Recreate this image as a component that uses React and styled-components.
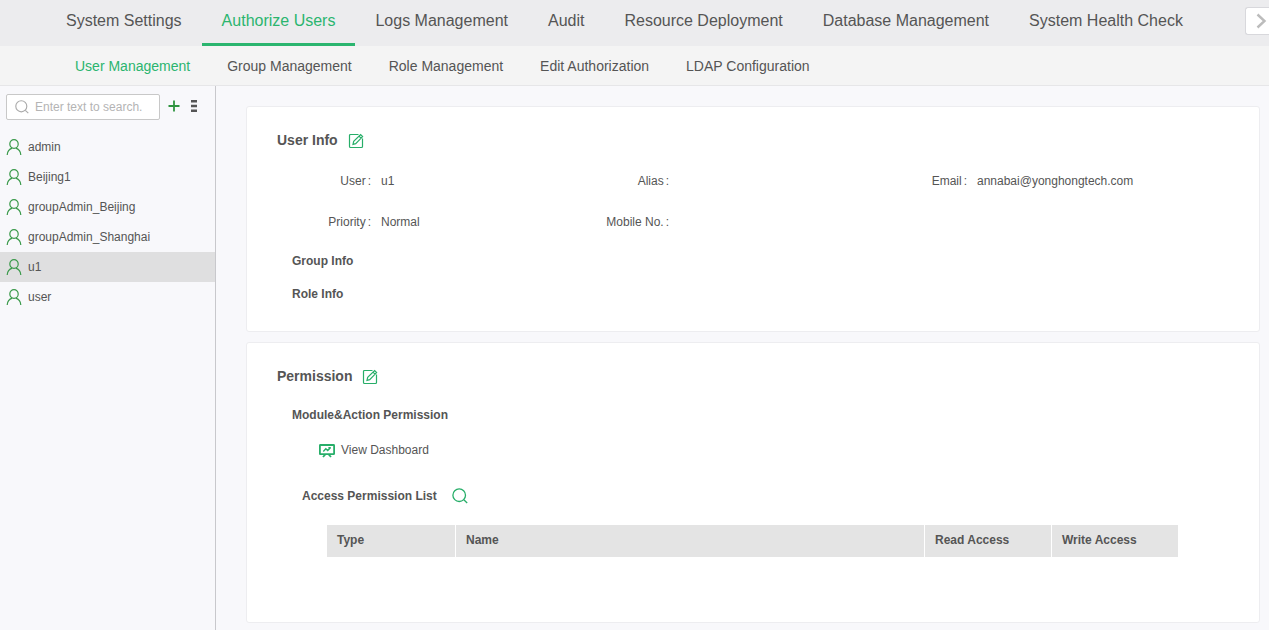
import { useState } from "react";
import styled, { createGlobalStyle } from "styled-components";

const GlobalStyle = createGlobalStyle`
  * {
    box-sizing: border-box;
  }

  body {
    margin: 0;
    background-color: #f8f8fb;
    color: #555;
    font-family: "Liberation Sans", Arial, Helvetica, sans-serif;
    font-size: 12px;
    line-height: 16px;
  }
`;

const Page = styled.div`
  display: flex;
  flex-direction: column;
  min-height: 100vh;
`;

const TopBar = styled.header`
  display: flex;
  justify-content: space-between;
  align-items: flex-start;
  background-color: #ececee;
`;

const TopTabs = styled.nav`
  display: flex;
  padding-left: 46px;
`;

const TopTab = styled.a`
  height: 46px;
  padding: 0 20px;
  border-bottom: 3px solid ${({ $active }) => ($active ? "#2bb56f" : "transparent")};
  color: ${({ $active }) => ($active ? "#2bb56f" : "#555")};
  font-size: 16px;
  line-height: 42px;
  text-decoration: none;
  white-space: nowrap;
`;

const ScrollButton = styled.button`
  display: flex;
  align-items: center;
  justify-content: center;
  width: 24px;
  height: 28px;
  margin-top: 7px;
  padding: 0 0 0 7px;
  border: 1px solid #d8d8dc;
  border-right: none;
  border-radius: 3px 0 0 3px;
  background-color: #fff;
`;

const SubTabs = styled.nav`
  display: flex;
  gap: 37px;
  height: 40px;
  padding-left: 75px;
  border-bottom: 1px solid #e6e6e8;
  background-color: #f4f4f4;
`;

const SubTab = styled.a`
  color: ${({ $active }) => ($active ? "#2bb56f" : "#555")};
  font-size: 14px;
  line-height: 40px;
  text-decoration: none;
  white-space: nowrap;
`;

const Body = styled.div`
  display: flex;
  flex: 1;
`;

const Sidebar = styled.aside`
  flex: none;
  width: 216px;
  border-right: 1px solid #c8c8cc;
`;

const SearchRow = styled.div`
  display: flex;
  align-items: center;
  padding: 8px 6px 12px;
`;

const SearchBox = styled.label`
  display: flex;
  align-items: center;
  gap: 6px;
  width: 154px;
  height: 26px;
  margin-right: 8px;
  padding-left: 8px;
  border: 1px solid #c8c8c8;
  border-radius: 2px;
  background-color: #fff;
`;

const SearchInput = styled.input`
  flex: 1;
  min-width: 0;
  padding: 0;
  border: none;
  outline: none;
  background: none;
  color: #555;
  font: inherit;

  &::placeholder {
    color: #b4b4b4;
  }
`;

const IconButton = styled.button`
  display: flex;
  padding: 0;
  border: none;
  background: none;
  cursor: pointer;
`;

const SidebarButton = styled(IconButton)`
  margin-right: 10px;
  margin-bottom: 2px;
`;

const UserList = styled.ul`
  margin: 0;
  padding: 0;
  list-style: none;
`;

const UserItem = styled.button`
  display: flex;
  align-items: center;
  gap: 6px;
  width: 100%;
  height: 30px;
  padding: 0 6px;
  border: none;
  background-color: ${({ $selected }) => ($selected ? "#dfdfe0" : "transparent")};
  color: #555;
  font: inherit;
  text-align: left;
  cursor: pointer;
`;

const Main = styled.main`
  display: flex;
  flex: 1;
  flex-direction: column;
  gap: 10px;
  min-width: 0;
  padding: 20px 9px 7px 30px;
`;

const Card = styled.section`
  padding: 24px 81px 12px 30px;
  border: 1px solid #ededf0;
  border-radius: 3px;
  background-color: #fff;
`;

const PermissionCard = styled(Card)`
  flex: 1;
`;

const CardHeader = styled.div`
  display: flex;
  align-items: flex-end;
  gap: 10px;
`;

const CardTitle = styled.h2`
  margin: 0;
  font-size: 14px;
  line-height: 18px;
`;

const Fields = styled.dl`
  display: grid;
  grid-template-columns: repeat(3, 1fr);
  row-gap: 25px;
  margin: 24px 0 23px;
  padding-right: 7px;
`;

const Field = styled.div`
  display: flex;
  gap: 10px;
  height: 16px;
`;

const FieldLabel = styled.dt`
  display: flex;
  flex: none;
  justify-content: flex-end;
  gap: 2px;
  width: 94px;
`;

const FieldValue = styled.dd`
  margin: 0;
`;

const SubTitle = styled.h3`
  margin: 0 0 17px 15px;
  font-size: 12px;
  line-height: 16px;
`;

const ModuleTitle = styled(SubTitle)`
  margin-top: 22px;
  margin-bottom: 19px;
`;

const ModuleItem = styled.div`
  display: flex;
  gap: 5px;
  margin-left: 41px;
`;

const AccessHeader = styled.div`
  display: flex;
  align-items: center;
  gap: 15px;
  margin: 28px 0 19px 25px;
`;

const AccessTitle = styled.h3`
  margin: 0;
  font-size: 12px;
  line-height: 20px;
`;

const TableWrap = styled.div`
  padding-left: 50px;
`;

const Table = styled.table`
  width: 100%;
  border-collapse: separate;
  border-spacing: 0;
  table-layout: fixed;
`;

const HeadCell = styled.th`
  width: ${({ $width }) => $width || "auto"};
  height: 32px;
  padding: 0 10px 2px;
  border-right: 1px solid #fff;
  background-color: #e4e4e4;
  text-align: left;

  &:last-child {
    border-right: none;
  }
`;

const ChevronIcon = () => (
  <svg width="12" height="16" viewBox="0 0 12 16" fill="none" stroke="#bcbcbc" strokeWidth="2.4">
    <path d="M2.500 1.500 9.500 8l-7 6.500" />
  </svg>
);

const SearchIcon = ({ color, size = 16 }) => (
  <svg width={size} height={size} viewBox="0 0 16 16" fill="none" stroke={color} strokeWidth="1.3">
    <circle cx="7.2" cy="7.2" r="6.3" />
    <path d="m11.8 11.8 3.4 3.2" />
  </svg>
);

const PlusIcon = () => (
  <svg width="12" height="12" viewBox="0 0 12 12" fill="none" stroke="#2f9440" strokeWidth="1.8">
    <path d="M6 .5v11M.5 6h11" />
  </svg>
);

const MenuIcon = () => (
  <svg width="8" height="12" viewBox="0 0 8 12" fill="#555">
    <path d="M1 0h6v2.400H1zM1 4.800h6v2.400H1zM1 9.600h6V12H1z" />
  </svg>
);

const UserIcon = () => (
  <svg width="16" height="16" viewBox="0 0 16 16" fill="none" stroke="#3b9a4b" strokeWidth="1.2">
    <ellipse cx="8" cy="5" rx="4.2" ry="4.4" />
    <path d="M1.2 16c.2-3.800 2-6 5-6.900M14.800 16c-.2-3.800-2-6-5-6.900" />
  </svg>
);

const EditIcon = () => (
  <svg width="16" height="16" viewBox="0 0 16 16" fill="none" stroke="#27ae69" strokeWidth="1.2">
    <path d="M10.500 1.500h-8a1 1 0 0 0-1 1v11a1 1 0 0 0 1 1h11a1 1 0 0 0 1-1V5.500" />
    <path d="m5 11.300.7-3 6.900-6.700 2 2-6.900 7zM11 3.200l2 2" />
  </svg>
);

const DashboardIcon = () => (
  <svg width="18" height="16" viewBox="0 0 18 16" fill="none" stroke="#27ae69" strokeWidth="1.8">
    <rect x="1.900" y="3" width="14.200" height="9.200" rx=".5" />
    <path d="m5.300 9.400 2.500-2.600 1.900 1.700 2.800-2.800M10.400 5.700h2.400" strokeWidth="1.400" />
    <path d="m7.300 12.500-2.300 2.500M10.700 12.500l2.300 2.500" />
  </svg>
);

const topTabs = [
  "System Settings",
  "Authorize Users",
  "Logs Management",
  "Audit",
  "Resource Deployment",
  "Database Management",
  "System Health Check",
];

const subTabs = [
  "User Management",
  "Group Management",
  "Role Management",
  "Edit Authorization",
  "LDAP Configuration",
];

const users = ["admin", "Beijing1", "groupAdmin_Beijing", "groupAdmin_Shanghai", "u1", "user"];

const fields = [
  { label: "User", value: "u1" },
  { label: "Alias", value: "" },
  { label: "Email", value: "annabai@yonghongtech.com" },
  { label: "Priority", value: "Normal" },
  { label: "Mobile No.", value: "" },
];

const columns = [
  { name: "Type", width: "129px" },
  { name: "Name" },
  { name: "Read Access", width: "127px" },
  { name: "Write Access", width: "126px" },
];

function App() {
  const [selected, setSelected] = useState("u1");

  return (
    <Page>
      <GlobalStyle />
      <TopBar>
        <TopTabs>
          {topTabs.map((tab) => (
            <TopTab key={tab} href="#" $active={tab === "Authorize Users"}>
              {tab}
            </TopTab>
          ))}
        </TopTabs>
        <ScrollButton type="button" aria-label="More tabs">
          <ChevronIcon />
        </ScrollButton>
      </TopBar>
      <SubTabs>
        {subTabs.map((tab) => (
          <SubTab key={tab} href="#" $active={tab === "User Management"}>
            {tab}
          </SubTab>
        ))}
      </SubTabs>
      <Body>
        <Sidebar>
          <SearchRow>
            <SearchBox>
              <SearchIcon color="#aaa" size={14} />
              <SearchInput type="text" aria-label="Search users" placeholder="Enter text to search." />
            </SearchBox>
            <SidebarButton type="button" aria-label="Add user">
              <PlusIcon />
            </SidebarButton>
            <SidebarButton type="button" aria-label="More actions">
              <MenuIcon />
            </SidebarButton>
          </SearchRow>
          <UserList>
            {users.map((user) => (
              <li key={user}>
                <UserItem type="button" $selected={user === selected} onClick={() => setSelected(user)}>
                  <UserIcon />
                  {user}
                </UserItem>
              </li>
            ))}
          </UserList>
        </Sidebar>
        <Main>
          <Card>
            <CardHeader>
              <CardTitle>User Info</CardTitle>
              <IconButton type="button" aria-label="Edit user info">
                <EditIcon />
              </IconButton>
            </CardHeader>
            <Fields>
              {fields.map(({ label, value }) => (
                <Field key={label}>
                  <FieldLabel>
                    <span>{label}</span>
                    <span>:</span>
                  </FieldLabel>
                  <FieldValue>{value}</FieldValue>
                </Field>
              ))}
            </Fields>
            <SubTitle>Group Info</SubTitle>
            <SubTitle>Role Info</SubTitle>
          </Card>
          <PermissionCard>
            <CardHeader>
              <CardTitle>Permission</CardTitle>
              <IconButton type="button" aria-label="Edit permission">
                <EditIcon />
              </IconButton>
            </CardHeader>
            <ModuleTitle>Module&amp;Action Permission</ModuleTitle>
            <ModuleItem>
              <DashboardIcon />
              View Dashboard
            </ModuleItem>
            <AccessHeader>
              <AccessTitle>Access Permission List</AccessTitle>
              <IconButton type="button" aria-label="Search permissions">
                <SearchIcon color="#27ae69" />
              </IconButton>
            </AccessHeader>
            <TableWrap>
              <Table>
                <thead>
                  <tr>
                    {columns.map(({ name, width }) => (
                      <HeadCell key={name} scope="col" $width={width}>
                        {name}
                      </HeadCell>
                    ))}
                  </tr>
                </thead>
              </Table>
            </TableWrap>
          </PermissionCard>
        </Main>
      </Body>
    </Page>
  );
}

export default App;
